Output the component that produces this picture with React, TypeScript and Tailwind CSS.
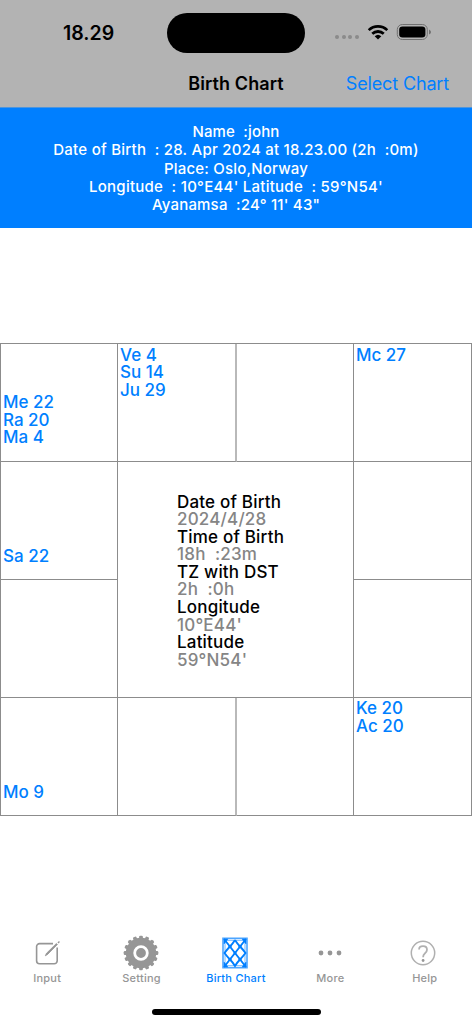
import type { ReactNode } from "react";

const summary = [
  { text: "Name  :john", tracking: "tracking-[0.15px]" },
  { text: "Date of Birth  : 28. Apr 2024 at 18.23.00 (2h  :0m)", tracking: "tracking-[0.25px]" },
  { text: "Place: Oslo,Norway", tracking: "tracking-[0.2px]" },
  { text: "Longitude  : 10°E44' Latitude  : 59°N54'", tracking: "tracking-[0.25px]" },
  { text: "Ayanamsa  :24° 11' 43\"", tracking: "tracking-[0.2px]" },
];

const details = [
  { label: "Date of Birth", value: "2024/4/28" },
  { label: "Time of Birth", value: "18h  :23m" },
  { label: "TZ with DST", value: "2h  :0h" },
  { label: "Longitude", value: "10°E44'" },
  { label: "Latitude", value: "59°N54'" },
];

function StatusBar() {
  return (
    <div className="flex h-[66px] items-center">
      <div className="w-[167px] pl-[63px] text-[19.5px] font-semibold leading-6">18.29</div>
      <div className="h-10 w-[138px] rounded-full bg-black" />
      <div className="ml-[30px] mt-[8px] flex gap-[2.6px]">
        {[0, 1, 2, 3].map((dot) => (
          <span key={dot} className="size-1 rounded-full bg-[#8b8b8b]" />
        ))}
      </div>
      <svg className="ml-2 mb-[3px]" width="22" height="16" viewBox="0 0 22 16">
        <path d="M.8 5.2a14.7 14.7 0 0 1 20.4 0l-1.8 1.9a12.1 12.1 0 0 0-16.8 0z" />
        <path d="M4.3 8.8a9.7 9.7 0 0 1 13.4 0l-1.9 2a7 7 0 0 0-9.6 0z" />
        <path d="M7.7 12.2a4.8 4.8 0 0 1 6.6 0L11 15.6z" />
      </svg>
      <svg className="ml-[7px] mb-[2px]" width="36" height="18" viewBox="0 0 36 18">
        <rect x="1.3" y="1.5" width="30" height="15" rx="5" fill="none" stroke="#707070" strokeWidth="1" />
        <rect x="3.2" y="3.4" width="26.2" height="11.2" rx="3.3" />
        <path d="M33 6.5q2 1 2 2.5t-2 2.5z" fill="#707070" />
      </svg>
    </div>
  );
}

function Cell({ items, className = "" }: { items?: string[]; className?: string }) {
  return (
    <div
      className={`flex flex-col border-b border-[#8c8c8c] px-0.5 text-[17px] font-medium leading-[17.6px] text-[#007fff] ${className}`}
    >
      {items?.map((item) => (
        <div key={item}>{item}</div>
      ))}
    </div>
  );
}

function Tab({ label, active, children }: { label: string; active?: boolean; children: ReactNode }) {
  return (
    <button className={`flex w-1/5 flex-col items-center ${active ? "text-[#007fff]" : "text-[#969696]"}`}>
      <span className="flex h-9 items-center justify-center">{children}</span>
      <span className="text-[11px] font-medium leading-[14px] tracking-[0.25px]">{label}</span>
    </button>
  );
}

function GearIcon() {
  return (
    <svg className="mr-px" width="36" height="36" viewBox="0 0 36 36">
      <circle cx="18" cy="18" r="15.2" fill="#969696" />
      {Array.from({ length: 16 }, (_, i) => (
        <rect key={i} x="16.1" y="0.7" width="3.8" height="4" rx="1.2" fill="#969696" transform={`rotate(${i * 22.5} 18 18)`} />
      ))}
      <circle cx="18" cy="18" r="6.3" fill="#969696" stroke="white" strokeWidth="2.8" />
    </svg>
  );
}

export default function App() {
  return (
    <div className="flex h-[1024px] w-[472px] flex-col overflow-hidden bg-white font-['Inter',sans-serif] text-black">
      <header className="h-[107px] shrink-0 bg-[#b3b3b3]">
        <StatusBar />
        <div className="grid h-[34px] grid-cols-[1fr_auto_1fr] items-center">
          <span />
          <h1 className="text-[18px] font-semibold tracking-[0.1px]">Birth Chart</h1>
          <button className="pr-[23px] text-right text-[18px] tracking-[-0.15px] text-[#007fff]">Select Chart</button>
        </div>
      </header>

      <section className="flex h-[121px] shrink-0 flex-col items-center border-t border-[#4d95dd] bg-[#007fff] pt-[15px] text-[15px] font-medium leading-[18.3px] text-white">
        {summary.map((line) => (
          <div key={line.text} className={`whitespace-pre ${line.tracking}`}>{line.text}</div>
        ))}
      </section>

      <main className="mt-[115px] grid h-[473px] shrink-0 grid-cols-[117px_119px_117px_118px] grid-rows-[repeat(4,118px)] border-l border-t border-[#8c8c8c]">
        <Cell className="justify-end border-r pb-[14px]" items={["Me 22", "Ra 20", "Ma 4"]} />
        <Cell className="border-r-2 border-r-[#b9b9b9] pt-[2.5px]" items={["Ve 4", "Su 14", "Ju 29"]} />
        <Cell className="border-r" />
        <Cell className="border-r pt-[2.5px]" items={["Mc 27"]} />

        <Cell className="justify-end border-r pb-[13px]" items={["Sa 22"]} />
        <div className="col-span-2 row-span-2 border-b border-r border-[#8c8c8c] pl-[59px] pt-[31.5px] text-[17px] font-medium leading-[17.6px] tracking-[0.19px]">
          {details.map((item) => (
            <div key={item.label}>
              <div>{item.label}</div>
              <div className="whitespace-pre text-[#858585]">{item.value}</div>
            </div>
          ))}
        </div>
        <Cell className="border-r" />
        <Cell className="border-r" />
        <Cell className="border-r" />

        <Cell className="justify-end border-r pb-[13px]" items={["Mo 9"]} />
        <Cell className="border-r-2 border-r-[#b9b9b9]" />
        <Cell className="border-r" />
        <Cell className="border-r pt-0.5" items={["Ke 20", "Ac 20"]} />
      </main>

      <nav className="mt-[119px] flex">
        <Tab label="Input">
          <svg width="28" height="28" viewBox="0 0 28 28" fill="none" stroke="currentColor" strokeWidth="1.6">
            <path d="M20 4.6H6.6a3 3 0 0 0-3 3v14.2a3 3 0 0 0 3 3h14.6a3 3 0 0 0 3-3V8.5" />
            <path d="m12.3 16.8 1.2-2.5L23.4 4.5l1 1-9.8 9.9z" fill="currentColor" strokeWidth="0.8" />
            <path d="m25.2 2.8 1 1" strokeWidth="2" />
          </svg>
        </Tab>
        <Tab label="Setting">
          <GearIcon />
        </Tab>
        <Tab label="Birth Chart" active>
          <svg className="mr-px" width="26" height="32" viewBox="0 0 26 32" fill="none" stroke="currentColor">
            <rect x="1" y="1.3" width="24" height="29.4" stroke="#4da5ff" strokeWidth="1.6" />
            <path d="M3 3.3h20v25.4H3z" stroke="#4da5ff" strokeWidth="0.8" />
            <path d="m2 2 22 28M24 2 2 30" strokeWidth="1.9" />
            <path d="M13 3Q10.5 7 8 9.5T2.5 16Q5.5 20 8 22.5T13 29q2.5-4 5-6.5t5.500-6.500Q20.500 12 18 9.500T13 3" strokeWidth="1.9" />
            <path d="M2 2h4L2 7zM24 2h-4l4 5zM2 30h4l-4-5zM24 30h-4l4-5z" fill="currentColor" strokeWidth="0.5" />
            <g fill="currentColor" stroke="none">
              <circle cx="8" cy="9.5" r="1.6" />
              <circle cx="18" cy="9.5" r="1.6" />
              <circle cx="13" cy="16" r="1.6" />
              <circle cx="8" cy="22.5" r="1.6" />
              <circle cx="18" cy="22.5" r="1.6" />
            </g>
          </svg>
        </Tab>
        <Tab label="More">
          <svg width="24" height="6" viewBox="0 0 24 6" fill="currentColor">
            <circle cx="3" cy="3" r="2.4" />
            <circle cx="12" cy="3" r="2.4" />
            <circle cx="21" cy="3" r="2.4" />
          </svg>
        </Tab>
        <Tab label="Help">
          <svg className="mr-[3px]" width="26" height="26" viewBox="0 0 26 26" fill="none" stroke="#b0b0b0">
            <circle cx="13" cy="13" r="11.7" strokeWidth="1.5" />
            <path d="M9.1 9.4c0-2 1.6-3.2 3.9-3.2s4 1.3 4 3.5c0 1.8-.8 2.7-2.2 3.8-1.3 1-1.7 1.7-1.7 3.8" strokeWidth="1.8" />
            <circle cx="13.1" cy="20.5" r="1.4" fill="#969696" stroke="none" />
          </svg>
        </Tab>
      </nav>
      <div className="mx-auto mb-[9px] mt-auto h-[6px] w-[169px] shrink-0 rounded-full bg-black" />
    </div>
  );
}
